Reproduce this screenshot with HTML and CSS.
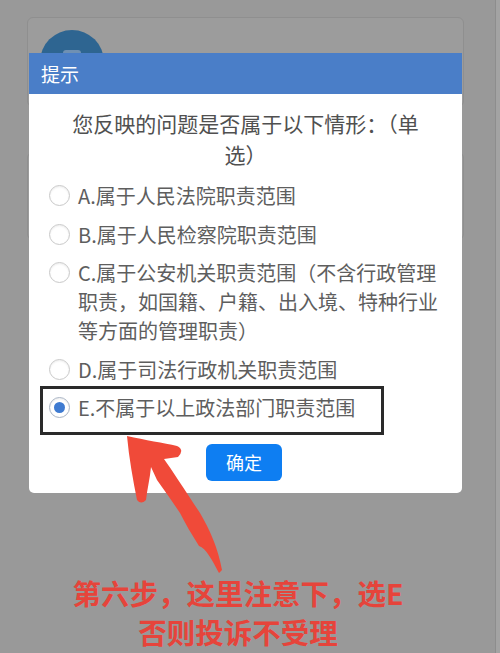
FILE: index.html
```html
<!DOCTYPE html>
<html lang="zh-CN">
<head>
<meta charset="utf-8">
<title>提示</title>
<link rel="stylesheet" href="styles.css">
</head>
<body>
<div class="page">
  <div class="bg-card card-one">
    <div class="avatar"><span class="avatar-icon"></span></div>
  </div>
  <div class="bg-card card-two"></div>
  <div class="edge-strip"></div>

  <div class="overlay">
    <div class="dialog">
      <div class="dialog-head">提示</div>
      <div class="dialog-body">
        <p class="question">您反映的问题是否属于以下情形：（单选）</p>
        <ul class="options">
          <li class="option"><span class="radio"></span><span class="label">A.属于人民法院职责范围</span></li>
          <li class="option"><span class="radio"></span><span class="label">B.属于人民检察院职责范围</span></li>
          <li class="option"><span class="radio"></span><span class="label">C.属于公安机关职责范围（不含行政管理职责，如国籍、户籍、出入境、特种行业等方面的管理职责）</span></li>
          <li class="option"><span class="radio"></span><span class="label">D.属于司法行政机关职责范围</span></li>
          <li class="option"><span class="radio checked"></span><span class="label">E.不属于以上政法部门职责范围</span></li>
        </ul>
        <div class="actions"><button class="btn-ok">确定</button></div>
      </div>
    </div>
    <p class="note">第六步，这里注意下，选E<br>否则投诉不受理</p>
  </div>

  <div class="highlight-box"></div>
  <svg class="arrow" viewBox="100 420 140 170" width="140" height="170">
    <path d="M127,436 C145,440 164,443 177,446 Q185,450 178,457 L164,459 C172,470 186,492 200,513 C210,530 218,548 222,570 L219,573 C212,560 206,548 199,546 C192,535 185,523 180,513 C172,501 164,490 157,480 L151,467 C150,478 147,490 146,500 Q141,505 137,500 C133,480 129,458 127,436 Z" fill="#f04a39"/>
  </svg>
</div>
</body>
</html>
```
FILE: styles.css
```css
* { box-sizing: border-box; }
html, body { margin: 0; padding: 0; }
body {
  width: 500px;
  height: 653px;
  overflow: hidden;
  background: #999999;
  font-family: "Noto Sans CJK SC", "Noto Sans", sans-serif;
}
.page {
  position: relative;
  width: 500px;
  height: 653px;
  padding: 17px 36px 0 27px;
  display: flex;
  flex-direction: column;
  gap: 45px;
}
.bg-card {
  width: 437px;
  background: #9c9c9c;
  border: 1px solid #8f8f8f;
  border-radius: 6px;
  padding: 12px;
}
.card-one { height: 90px; }
.card-two { height: 88px; }
.avatar {
  width: 64px;
  height: 64px;
  border-radius: 50%;
  background: #2e6591;
  display: flex;
  justify-content: center;
  padding-top: 20px;
}
.avatar-icon {
  width: 18px;
  height: 10px;
  border-radius: 3px;
  background: #6f90b3;
}
.edge-strip {
  position: absolute;
  top: 0;
  right: 0;
  width: 5px;
  height: 653px;
  background: #a3a3a3;
  border-left: 1px solid #8d8d8d;
}
.overlay {
  position: absolute;
  inset: 0;
  padding: 53px 0 0 29px;
  display: flex;
  flex-direction: column;
}
.dialog {
  width: 433px;
  background: #ffffff;
  border-radius: 0 0 5px 5px;
}
.dialog-head {
  height: 41px;
  line-height: 41px;
  background: #4a7ec8;
  color: #ffffff;
  font-size: 19px;
  padding-left: 12px;
}
.dialog-body {
  padding: 14px 0 12px 0;
}
.question {
  margin: 0;
  padding: 0 34px;
  text-align: center;
  font-size: 21px;
  line-height: 31px;
  color: #505050;
}
.options {
  list-style: none;
  margin: 11px 0 0 0;
  padding: 0 16px 0 20px;
  display: flex;
  flex-direction: column;
  gap: 9.5px;
}
.option {
  display: flex;
  align-items: flex-start;
  gap: 8px;
  font-size: 20px;
  line-height: 29px;
  color: #5e5e5e;
}
.radio {
  flex: none;
  width: 21px;
  height: 21px;
  margin-top: 4px;
  border-radius: 50%;
  border: 1px solid #c9c9c9;
  background: #ffffff;
  box-shadow: inset 0 1px 2px rgba(0,0,0,0.08);
  display: flex;
  align-items: center;
  justify-content: center;
}
.radio.checked {
  border-color: #a9b4c4;
}
.radio.checked::after {
  content: "";
  width: 11px;
  height: 11px;
  border-radius: 50%;
  background: #3f7bd1;
}
.label { flex: 1; }
.actions {
  margin-top: 21.5px;
  display: flex;
  justify-content: center;
  padding-right: 3px;
}
.btn-ok {
  width: 76px;
  height: 37px;
  border: none;
  border-radius: 6px;
  background: #0e7ef2;
  color: #ffffff;
  font-family: "Noto Sans CJK SC", "Noto Sans", sans-serif;
  font-size: 18px;
  padding: 0;
}
.note {
  margin: 80px 0 0 0;
  padding-right: 53px;
  text-align: center;
  font-size: 28.5px;
  line-height: 39px;
  font-weight: bold;
  color: #e6443b;
}
.highlight-box {
  position: absolute;
  left: 40px;
  top: 386px;
  width: 344px;
  height: 49px;
  border: 3px solid #2a2a2a;
}
.arrow {
  position: absolute;
  left: 100px;
  top: 420px;
}
```
